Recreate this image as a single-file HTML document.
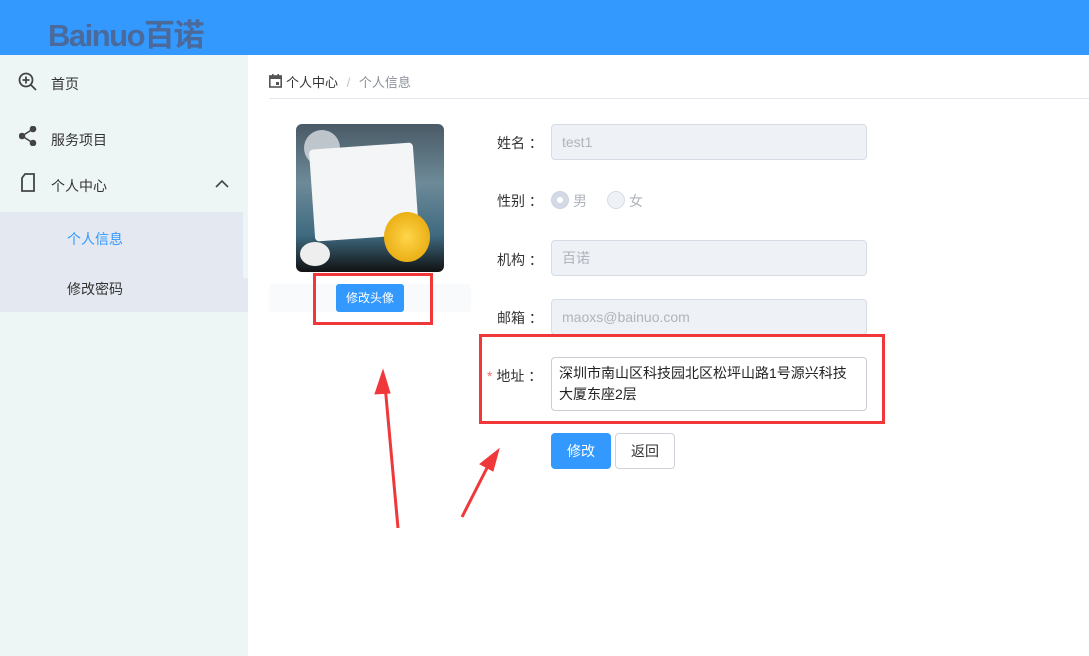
<!DOCTYPE html>
<html><head><meta charset="utf-8"><style>
*{margin:0;padding:0;box-sizing:border-box}
body{width:1089px;height:656px;overflow:hidden;background:#fff;font-family:"Liberation Sans","Noto Sans CJK SC",sans-serif;position:relative;font-size:14px;color:#333}
.hdr{position:absolute;left:0;top:0;width:1089px;height:55px;background:#3399ff}
.logo{position:absolute;left:48px;top:10px;font-size:31px;color:#4a6a9c;letter-spacing:-1.5px;font-weight:bold}
.side{position:absolute;left:0;top:55px;width:248px;height:601px;background:#eef6f5}
.it{position:absolute;left:51px;font-size:14px;color:#333}
.sub{position:absolute;left:0;top:212px;width:248px;height:100px;background:#e4e8f0}
.abs{position:absolute}
.lbl{position:absolute;left:497px;font-size:14px;color:#333}
.inp{position:absolute;left:551px;width:316px;height:36px;border:1px solid #d7dde6;border-radius:4px;background:#eef1f6;color:#b0b4bb;padding:0 10px;line-height:34px;font-size:14px}
</style></head><body>
<div class="hdr"><div class="logo">Bainuo百诺</div></div>
<div class="side">
<svg class="abs" style="left:18px;top:17px" width="20" height="20" viewBox="0 0 20 20" fill="none" stroke="#444" stroke-width="1.8"><circle cx="8" cy="8" r="6.5"/><path d="M8 4.5v7M4.5 8h7M13 13l5 5"/></svg>
<div class="it" style="top:19px">首页</div>
<svg class="abs" style="left:19px;top:71px" width="18" height="20" viewBox="0 0 18 20" fill="#444" stroke="#444" stroke-width="1.6"><circle cx="3" cy="10" r="2.5"/><circle cx="14" cy="3" r="2.5"/><circle cx="14" cy="17" r="2.5"/><path d="M3 10L14 3M3 10l11 7" fill="none"/></svg>
<div class="it" style="top:75px">服务项目</div>
<svg class="abs" style="left:20px;top:118px" width="16" height="20" viewBox="0 0 16 20" fill="none" stroke="#444" stroke-width="1.8"><path d="M5 1h9v17H2V5z"/></svg>
<div class="it" style="top:121px">个人中心</div>
<svg class="abs" style="left:215px;top:124px" width="14" height="10" viewBox="0 0 14 10" fill="none" stroke="#444" stroke-width="1.6"><path d="M1 8l6-6 6 6"/></svg>
</div>
<div class="sub"><div style="position:absolute;left:243px;top:0;width:5px;height:66px;background:#eef6f5"></div>
<div class="abs" style="left:67px;top:17px;color:#3399ff">个人信息</div>
<div class="abs" style="left:67px;top:67px;color:#333">修改密码</div></div>

<svg class="abs" style="left:269px;top:74px" width="13" height="14" viewBox="0 0 13 14"><rect x="0.8" y="2" width="11.4" height="11" fill="none" stroke="#555" stroke-width="1.6"/><rect x="0" y="2" width="13" height="3" fill="#555"/><rect x="3" y="0" width="1.6" height="3" fill="#555"/><rect x="8.4" y="0" width="1.6" height="3" fill="#555"/><rect x="7" y="8" width="3" height="3" fill="#555"/></svg>
<div class="abs" style="left:286px;top:72px;font-size:13px;color:#333">个人中心 <span style="color:#c0c4cc;margin:0 5px">/</span> <span style="color:#8a8f99">个人信息</span></div>
<div class="abs" style="left:269px;top:98px;width:820px;height:1px;background:#e4e7ed"></div>

<div class="abs" style="left:296px;top:124px;width:148px;height:148px;border-radius:6px;overflow:hidden;background:linear-gradient(180deg,#4a5a66 0%,#6d8a98 40%,#3f6a80 75%,#111 100%)">
<div class="abs" style="left:8px;top:6px;width:36px;height:36px;border-radius:50%;background:#d8dde2;opacity:.8"></div>
<div class="abs" style="left:16px;top:22px;width:104px;height:92px;background:#f4f5f6;transform:rotate(-4deg);border-radius:4px"></div>
<div class="abs" style="left:88px;top:88px;width:46px;height:50px;border-radius:50%;background:radial-gradient(#ffd54a,#e2a000)"></div>
<div class="abs" style="left:4px;top:118px;width:30px;height:24px;border-radius:50%;background:#eee"></div>
</div>
<div class="abs" style="left:269px;top:284px;width:202px;height:28px;background:#f8fafc;border-radius:4px"></div>
<div class="abs" style="left:336px;top:284px;width:68px;height:28px;background:#3399ff;border-radius:3px;color:#fff;font-size:12px;text-align:center;line-height:28px">修改头像</div>
<div class="abs" style="left:313px;top:273px;width:120px;height:52px;border:3px solid #f0383b"></div>

<div class="lbl" style="top:133px">姓名 ：</div><div class="inp" style="top:124px">test1</div>
<div class="lbl" style="top:191px">性别 ：</div>
<div class="abs" style="left:551px;top:191px;width:18px;height:18px;border-radius:50%;background:#d5dbe6;border:1px solid #cdd4de"><div style="margin:5px;width:6px;height:6px;border-radius:50%;background:#fff"></div></div>
<div class="abs" style="left:573px;top:191px;color:#b0b4bb">男</div>
<div class="abs" style="left:607px;top:191px;width:18px;height:18px;border-radius:50%;background:#eef1f6;border:1px solid #d7dde6"></div>
<div class="abs" style="left:629px;top:191px;color:#b0b4bb">女</div>
<div class="lbl" style="top:250px">机构 ：</div><div class="inp" style="top:240px">百诺</div>
<div class="lbl" style="top:308px">邮箱 ：</div><div class="inp" style="top:299px">maoxs@bainuo.com</div>
<div class="lbl" style="top:366px;left:487px"><span style="color:#f56c6c">*</span> 地址 ：</div>
<div class="abs" style="left:551px;top:357px;width:316px;height:54px;border:1px solid #c8cdd6;border-radius:4px;background:#fff;padding:5px 7px;font-size:14px;line-height:21px;color:#222">深圳市南山区科技园北区松坪山路1号源兴科技大厦东座2层</div>
<div class="abs" style="left:479px;top:334px;width:406px;height:90px;border:3px solid #f0383b"></div>
<div class="abs" style="left:551px;top:433px;width:60px;height:36px;background:#3399ff;border-radius:4px;color:#fff;text-align:center;line-height:36px">修改</div>
<div class="abs" style="left:615px;top:433px;width:60px;height:36px;background:#fff;border:1px solid #d0d4da;border-radius:4px;color:#333;text-align:center;line-height:34px">返回</div>

<svg class="abs" style="left:0;top:0" width="1089" height="656"><g fill="#f0383b" stroke="#f0383b" stroke-width="3"><path d="M398 528L385 385" fill="none"/><path d="M383 370l-8 24l15 -1z" stroke-width="1"/><path d="M462 517L490 462" fill="none"/><path d="M499 449l-19 15l13 7z" stroke-width="1"/></g></svg>
</body></html>
